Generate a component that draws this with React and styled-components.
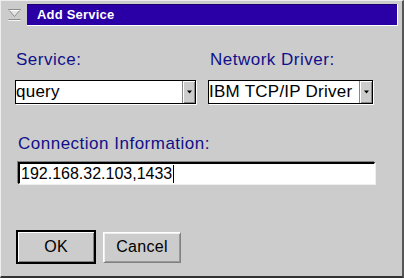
import React from 'react';
import styled, { createGlobalStyle } from 'styled-components';

const Global = createGlobalStyle`
  html, body {
    margin: 0;
    padding: 0;
    background: #cccccc;
  }
  * {
    box-sizing: border-box;
  }
`;

const Window = styled.div`
  width: 404px;
  height: 278px;
  background: #cccccc;
  border-top: 1px solid #eeeeee;
  border-left: 1px solid #eeeeee;
  border-right: 2px solid #555555;
  border-bottom: 2px solid #333333;
  display: flex;
  flex-direction: column;
  font-family: 'Liberation Sans', Arial, sans-serif;
`;

const TitleRow = styled.div`
  display: flex;
  height: 23px;
  margin-top: 3px;
  padding-right: 4px;
`;

const SysMenu = styled.div`
  width: 26px;
  display: flex;
  align-items: flex-start;
  justify-content: center;
  padding-top: 4px;
`;

const TitleBar = styled.div`
  flex: 1;
  background: #2a00a6;
  border-bottom: 1px solid #ffffff;
  border-right: 1px solid #ffffff;
  box-shadow: inset 0 1px 0 #1c0070;
  color: #ffffff;
  font-size: 13px;
  font-weight: bold;
  letter-spacing: 0.2px;
  padding-left: 10px;
  display: flex;
  align-items: center;
  height: 22px;
`;

const Body = styled.div`
  flex: 1;
  display: flex;
  flex-direction: column;
  padding: 23px 0 0 14px;
`;

const Fields = styled.div`
  display: flex;
  gap: 12px;
`;

const Field = styled.div`
  display: flex;
  flex-direction: column;
  width: ${p => p.width}px;
  gap: 10px;
`;

const Label = styled.div`
  color: #10108a;
  font-size: 17px;
  line-height: 20px;
  letter-spacing: 0.5px;
  padding-left: ${p => p.indent || 1}px;
`;

const Combo = styled.div`
  height: 24px;
  display: flex;
  background: #ffffff;
  border: 1px solid #000000;
  box-shadow: 1px 1px 0 #ffffff;
`;

const ComboText = styled.div`
  flex: 1;
  font-size: 17px;
  line-height: 22px;
  letter-spacing: 0.25px;
  color: #000000;
  white-space: nowrap;
  overflow: hidden;
`;

const DropButton = styled.div`
  width: 13px;
  background: #cccccc;
  border-left: 1px solid #888888;
  box-shadow: inset 1px 1px 0 #ffffff, inset -1px -1px 0 #888888;
  display: flex;
  align-items: center;
  justify-content: center;
`;

const ConnField = styled.div`
  display: flex;
  flex-direction: column;
  gap: 8px;
  margin-top: 30px;
  width: 360px;
`;

const Entry = styled.div`
  height: 22px;
  display: flex;
  align-items: center;
  background: #ffffff;
  border-top: 2px solid #000000;
  border-left: 2px solid #000000;
  border-bottom: 1px solid #ffffff;
  border-right: 1px solid #ffffff;
  box-shadow: -1px -1px 0 #808080, 1px 1px 0 #eeeeee;
  margin-left: 3px;
  padding-left: 1px;
  font-size: 16px;
  color: #000000;
`;

const Caret = styled.span`
  display: inline-block;
  width: 1px;
  height: 18px;
  background: #000000;
  margin-left: 1px;
`;

const Buttons = styled.div`
  display: flex;
  align-items: center;
  gap: 7px;
  margin-top: 46px;
  padding-left: 1px;
`;

const Button = styled.div`
  width: ${p => p.width}px;
  height: ${p => p.height}px;
  display: flex;
  align-items: center;
  justify-content: center;
  font-size: 16px;
  letter-spacing: 0.3px;
  color: #000000;
  background: #cccccc;
  border: ${p => (p.primary ? '2px solid #000000' : '1px solid')};
  border-color: ${p => (p.primary ? '#000000' : '#ffffff #808080 #808080 #ffffff')};
  box-shadow: ${p =>
    p.primary
      ? 'inset 1px 1px 0 #ffffff, inset -1px -1px 0 #808080'
      : 'inset 1px 1px 0 #eeeeee, inset -1px -1px 0 #999999'};
`;

const ArrowDown = () => (
  <svg width="7" height="4" viewBox="0 0 7 4">
    <path d="M1 0.5h5L3.5 3.5z" fill="#000000" />
  </svg>
);

const MenuIcon = () => (
  <svg width="13" height="13" viewBox="0 0 13 13">
    <path d="M0.5 1.5h12L6.5 8.5z" fill="#e4e4e4" stroke="#8c8c8c" />
    <path d="M1.5 2.5h10" stroke="#ffffff" />
    <path d="M0.5 11.5h12" stroke="#8c8c8c" />
    <path d="M0.5 12.5h12" stroke="#f4f4f4" />
  </svg>
);

const App = () => (
  <Window>
    <Global />
    <TitleRow>
      <SysMenu>
        <MenuIcon />
      </SysMenu>
      <TitleBar>Add Service</TitleBar>
    </TitleRow>
    <Body>
      <Fields>
        <Field width={181}>
          <Label>Service:</Label>
          <Combo>
            <ComboText>query</ComboText>
            <DropButton>
              <ArrowDown />
            </DropButton>
          </Combo>
        </Field>
        <Field width={165}>
          <Label indent={2}>Network Driver:</Label>
          <Combo>
            <ComboText>IBM TCP/IP Driver</ComboText>
            <DropButton>
              <ArrowDown />
            </DropButton>
          </Combo>
        </Field>
      </Fields>
      <ConnField>
        <Label indent={3}>Connection Information:</Label>
        <Entry>
          192.168.32.103,1433
          <Caret />
        </Entry>
      </ConnField>
      <Buttons>
        <Button primary width={80} height={34}>OK</Button>
        <Button width={78} height={31}>Cancel</Button>
      </Buttons>
    </Body>
  </Window>
);

export default App;
